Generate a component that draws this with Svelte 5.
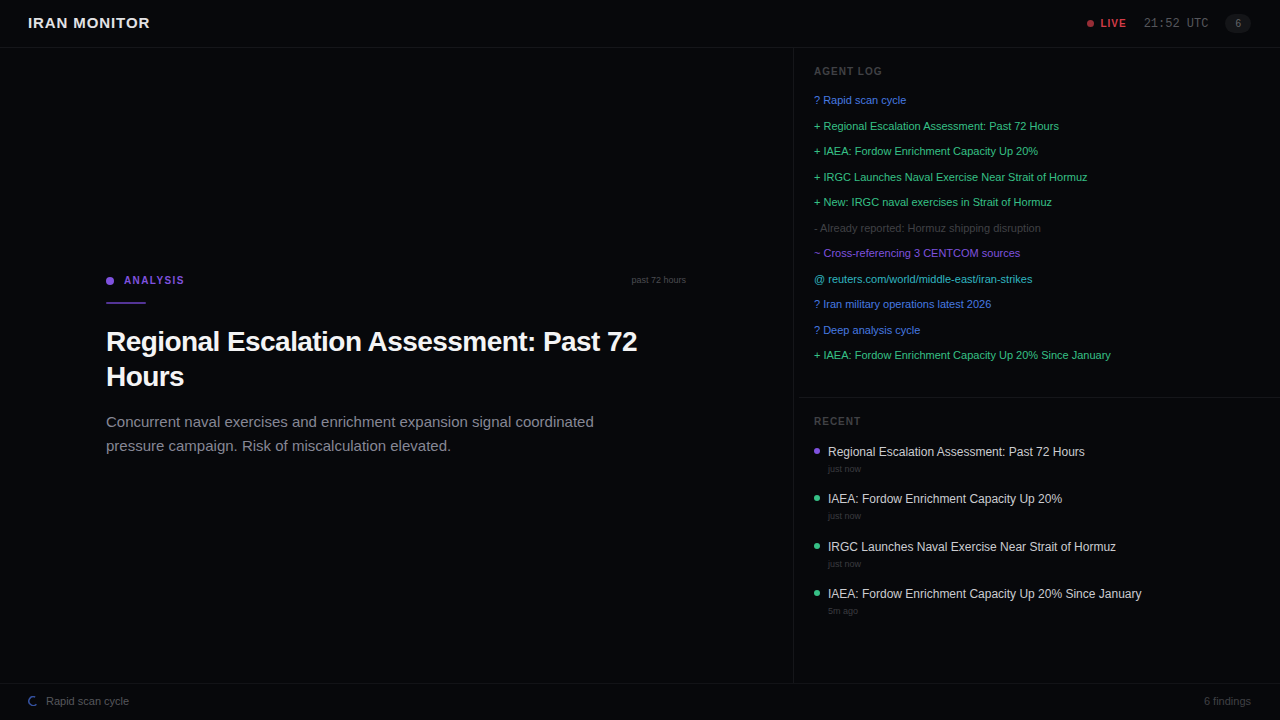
<script>
  const count = 6;
  const log = [
    { kind: 'search', mark: '?', text: 'Rapid scan cycle' },
    { kind: 'add', mark: '+', text: 'Regional Escalation Assessment: Past 72 Hours' },
    { kind: 'add', mark: '+', text: 'IAEA: Fordow Enrichment Capacity Up 20%' },
    { kind: 'add', mark: '+', text: 'IRGC Launches Naval Exercise Near Strait of Hormuz' },
    { kind: 'add', mark: '+', text: 'New: IRGC naval exercises in Strait of Hormuz' },
    { kind: 'skip', mark: '-', text: 'Already reported: Hormuz shipping disruption' },
    { kind: 'think', mark: '~', text: 'Cross-referencing 3 CENTCOM sources' },
    { kind: 'fetch', mark: '@', text: 'reuters.com/world/middle-east/iran-strikes' },
    { kind: 'search', mark: '?', text: 'Iran military operations latest 2026' },
    { kind: 'search', mark: '?', text: 'Deep analysis cycle' },
    { kind: 'add', mark: '+', text: 'IAEA: Fordow Enrichment Capacity Up 20% Since January' }
  ];
  const recent = [
    { kind: 'think', title: 'Regional Escalation Assessment: Past 72 Hours', time: 'just now' },
    { kind: 'add', title: 'IAEA: Fordow Enrichment Capacity Up 20%', time: 'just now' },
    { kind: 'add', title: 'IRGC Launches Naval Exercise Near Strait of Hormuz', time: 'just now' },
    { kind: 'add', title: 'IAEA: Fordow Enrichment Capacity Up 20% Since January', time: '5m ago' }
  ];
</script>

<div class="app">
  <header class="topbar">
    <h1>IRAN MONITOR</h1>
    <div class="status">
      <span class="live"><i class="live-dot"></i>LIVE</span>
      <time>21:52 UTC</time>
      <span class="badge">{count}</span>
    </div>
  </header>

  <div class="body">
    <main>
      <article>
        <div class="meta">
          <span class="category"><i class="dot large"></i>ANALYSIS</span>
          <span class="range">past 72 hours</span>
        </div>
        <div class="accent"></div>
        <h2>Regional Escalation Assessment: Past 72 Hours</h2>
        <p>
          Concurrent naval exercises and enrichment expansion signal coordinated pressure campaign.
          Risk of miscalculation elevated.
        </p>
      </article>
    </main>

    <aside>
      <section class="log">
        <h3>AGENT LOG</h3>
        <ul>
          {#each log as entry}
            <li class={entry.kind}>{entry.mark} {entry.text}</li>
          {/each}
        </ul>
      </section>
      <section class="recent">
        <h3>RECENT</h3>
        <ul>
          {#each recent as item}
            <li class={item.kind}>
              <i class="dot"></i>
              <div>
                <div class="title">{item.title}</div>
                <div class="ago">{item.time}</div>
              </div>
            </li>
          {/each}
        </ul>
      </section>
    </aside>
  </div>

  <footer>
    <span class="task">
      <svg width="10" height="10" viewBox="0 0 10 10" aria-hidden="true">
        <path d="M7.2 1.1A4.4 4.4 0 1 0 8.4 8.2" fill="none" stroke="#34519f" stroke-width="1.5" />
      </svg>
      Rapid scan cycle
    </span>
    <span class="findings">{count} findings</span>
  </footer>
</div>

<style>
  :global(body) {
    margin: 0;
    background: #07080b;
  }
  .app {
    display: flex;
    flex-direction: column;
    min-height: 100vh;
    background: #07080b;
    color: #f4f4f5;
    font-family: 'Liberation Sans', Arial, sans-serif;
  }
  h1, h2, h3, p, ul {
    margin: 0;
    padding: 0;
  }
  ul {
    list-style: none;
  }
  .topbar {
    display: flex;
    align-items: center;
    justify-content: space-between;
    box-sizing: border-box;
    min-height: 48px;
    padding: 0 29px 0 28px;
    border-bottom: 1px solid #15161a;
  }
  h1 {
    padding-bottom: 2px;
    font-size: 15px;
    line-height: 17px;
    letter-spacing: 0.06em;
    color: #e2e2e5;
  }
  .status {
    display: flex;
    align-items: center;
    gap: 17px;
  }
  .live {
    display: flex;
    align-items: center;
    gap: 6px;
    color: #d43c48;
    font-size: 10px;
    font-weight: 700;
    letter-spacing: 1px;
  }
  .live-dot {
    width: 7px;
    height: 7px;
    border-radius: 50%;
    background: #962d36;
  }
  time {
    color: #55565b;
    font: 12px 'Liberation Mono', monospace;
  }
  .badge {
    padding: 0 10px;
    border-radius: 10px;
    background: #141518;
    color: #65666a;
    font-size: 10px;
    line-height: 19px;
  }
  .body {
    display: grid;
    grid-template-columns: 793fr 487fr;
    flex: 1;
  }
  main {
    display: flex;
    align-items: center;
    justify-content: center;
    padding: 0 41px 0 40px;
  }
  article {
    width: 100%;
    max-width: 580px;
  }
  .meta {
    display: flex;
    align-items: center;
    justify-content: space-between;
    line-height: 15px;
  }
  .category {
    display: flex;
    align-items: center;
    gap: 10px;
    color: #7f52df;
    font-size: 10px;
    font-weight: 700;
    letter-spacing: 0.14em;
  }
  .range {
    color: #4b4c51;
    font-size: 9px;
  }
  .dot {
    flex: none;
    width: 6px;
    height: 6px;
    border-radius: 50%;
    background: currentColor;
  }
  .dot.large {
    width: 8px;
    height: 8px;
  }
  .accent {
    width: 40px;
    height: 2px;
    margin: 14px 0 20px;
    border-radius: 1px;
    background: #533496;
  }
  h2 {
    font-size: 28px;
    line-height: 35px;
    letter-spacing: -0.02em;
  }
  p {
    max-width: 520px;
    margin-top: 16px;
    color: #868795;
    font-size: 15px;
    line-height: 24px;
  }
  aside {
    display: flex;
    flex-direction: column;
    border-left: 1px solid #15161a;
  }
  section {
    margin-left: 5px;
    padding: 18px 15px 0;
  }
  .log {
    padding-bottom: 29px;
  }
  .recent {
    border-top: 1px solid #15161a;
    padding-bottom: 18px;
  }
  h3 {
    color: #404145;
    font-size: 10px;
    line-height: 12px;
    letter-spacing: 1px;
  }
  .log ul {
    margin-top: 9px;
  }
  .log li {
    padding: 5px 0 4px;
    font-size: 11px;
    line-height: 1.5;
  }
  .search { color: #467ae2; }
  .add { color: #36c086; }
  .skip { color: #404145; }
  .think { color: #7f52df; }
  .fetch { color: #2fb6c0; }
  .recent ul {
    margin-top: 8px;
  }
  .recent li {
    display: flex;
    gap: 8px;
    padding: 7px 0;
  }
  .recent .dot {
    margin-top: 5px;
  }
  .title {
    color: #cbccd0;
    font-size: 12px;
    line-height: 18px;
  }
  .ago {
    margin-top: 2px;
    color: #3b3c40;
    font-size: 9px;
    line-height: 1.5;
  }
  footer {
    display: flex;
    align-items: center;
    justify-content: space-between;
    box-sizing: border-box;
    min-height: 37px;
    padding: 0 29px 2px 28px;
    border-top: 1px solid #121317;
    color: #56575c;
    font-size: 11px;
  }
  .task {
    display: flex;
    align-items: center;
    gap: 8px;
  }
  .findings {
    color: #404145;
  }
</style>
